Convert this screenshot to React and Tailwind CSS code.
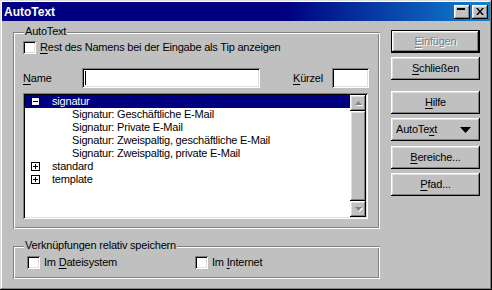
import React from 'react';

const raised = "shadow-[inset_-1px_-1px_0_#000,inset_1px_1px_0_#fff,inset_-2px_-2px_0_#808080,inset_2px_2px_0_#dfdfdf]";
const sunken = "shadow-[inset_1px_1px_0_#808080,inset_-1px_-1px_0_#fff,inset_2px_2px_0_#000,inset_-2px_-2px_0_#dfdfdf]";
const etched = "shadow-[inset_1px_1px_0_#808080,inset_-1px_-1px_0_#fff,inset_2px_2px_0_#fff,inset_-2px_-2px_0_#808080]";

const U = ({ children }) => <span className="underline underline-offset-[2px]">{children}</span>;

const Checkbox = () => (
  <div className={`w-[13px] h-[13px] bg-white shrink-0 ${sunken}`} />
);

const Legend = ({ children }) => (
  <div className="absolute left-[11px] top-[-7px] px-[1px] bg-[#c0c0c0] leading-[13px]">{children}</div>
);

const Button = ({ children, className = "" }) => (
  <div className={`h-[23px] w-[89px] flex items-center justify-center ${raised} ${className}`}>
    {children}
  </div>
);

const ArrowUp = ({ down }) => (
  <svg width="9" height="6" viewBox="0 0 9 6" className={down ? "rotate-180" : ""}>
    <polygon points="4.5,1 8,5 1,5" fill="#fff" transform={down ? "translate(-1,-1)" : "translate(1,1)"} />
    <polygon points="4.5,1 8,5 1,5" fill="#808080" />
  </svg>
);

const TreeBox = ({ open }) => (
  <div className="w-[9px] h-[9px] border border-black bg-white relative shrink-0">
    <div className="absolute left-[1px] top-[3px] w-[5px] h-[1px] bg-black" />
    {!open && <div className="absolute left-[3px] top-[1px] w-[1px] h-[5px] bg-black" />}
  </div>
);

export default function App() {
  const children = [
    "Signatur: Geschäftliche E-Mail",
    "Signatur: Private E-Mail",
    "Signatur: Zweispaltig, geschäftliche E-Mail",
    "Signatur: Zweispaltig, private E-Mail",
  ];

  return (
    <div className="w-[492px] h-[290px] bg-[#c0c0c0] p-[2px] flex flex-col text-[11px] tracking-[-0.2px] text-black font-['Liberation_Sans',Arial,sans-serif] shadow-[inset_-1px_-1px_0_#000,inset_1px_1px_0_#dfdfdf,inset_-2px_-2px_0_#808080,inset_2px_2px_0_#fff] overflow-hidden">
      {/* Title bar */}
      <div className="h-[19px] flex items-center justify-between pl-[2px] pr-[2px] bg-[linear-gradient(90deg,#000080_58%,#1084d0)]">
        <span className="text-white font-bold text-[12px] tracking-normal">AutoText</span>
        <div className="flex gap-[2px]">
          <div className={`w-[16px] h-[14px] bg-[#c0c0c0] relative ${raised}`}>
            <div className="absolute left-[3px] top-[3px] w-[8px] h-[2px] bg-black" />
          </div>
          <div className={`w-[16px] h-[14px] bg-[#c0c0c0] flex items-center justify-center ${raised}`}>
            <svg width="8" height="7" viewBox="0 0 8 7">
              <path d="M0 0h2l2 2.5L6 0h2L5 3.5 8 7H6L4 4.5 2 7H0l3-3.5z" fill="#000" />
            </svg>
          </div>
        </div>
      </div>

      {/* Body */}
      <div className="flex pl-[11px]">
        <div className="flex flex-col">
          {/* AutoText group */}
          <div className={`relative mt-[11px] w-[367px] h-[197px] pl-[10px] pt-[9px] flex flex-col ${etched}`}>
            <Legend>AutoText</Legend>
            <div className="flex items-center gap-[4px] h-[13px]">
              <Checkbox />
              <span><U>R</U>est des Namens bei der Eingabe als Tip anzeigen</span>
            </div>
            <div className="flex items-center mt-[14px] h-[20px]">
              <span className="w-[59px]"><U>N</U>ame</span>
              <div className={`w-[178px] h-[20px] bg-white relative ${sunken}`}>
                <div className="absolute left-[3px] top-[3px] w-[1px] h-[14px] bg-black" />
              </div>
              <span className="ml-[33px] w-[39px]"><U>K</U>ürzel</span>
              <div className={`w-[37px] h-[20px] bg-white ${sunken}`} />
            </div>
            <div className={`mt-[5px] w-[345px] h-[126px] bg-white p-[2px] flex ${sunken}`}>
              <div className="flex-1 flex flex-col leading-[13px]">
                <div className="h-[13px] flex items-center bg-[#000080] text-white pl-[6px]">
                  <TreeBox open />
                  <span className="ml-[12px]">signatur</span>
                </div>
                {children.map((c) => (
                  <div key={c} className="h-[13px] pl-[47px]">{c}</div>
                ))}
                <div className="h-[13px] flex items-center pl-[6px]">
                  <TreeBox />
                  <span className="ml-[12px]">standard</span>
                </div>
                <div className="h-[13px] flex items-center pl-[6px]">
                  <TreeBox />
                  <span className="ml-[12px]">template</span>
                </div>
              </div>
              <div className="w-[16px] flex flex-col bg-[#c0c0c0]">
                <div className={`h-[16px] flex items-center justify-center ${raised}`}>
                  <ArrowUp />
                </div>
                <div className={`flex-1 ${raised}`} />
                <div className={`h-[16px] flex items-center justify-center ${raised}`}>
                  <ArrowUp down />
                </div>
              </div>
            </div>
          </div>

          {/* Verknüpfungen group */}
          <div className={`relative mt-[17px] w-[367px] h-[33px] pl-[14px] pt-[10px] flex items-start ${etched}`}>
            <Legend>Verknüpfungen relativ speichern</Legend>
            <div className="w-[168px] flex items-center gap-[4px] h-[13px]">
              <Checkbox />
              <span>Im <U>D</U>ateisystem</span>
            </div>
            <div className="flex items-center gap-[4px] h-[13px]">
              <Checkbox />
              <span>Im <U>I</U>nternet</span>
            </div>
          </div>
        </div>

        {/* Buttons */}
        <div className="ml-[11px] mt-[9px] flex flex-col">
          <div className="w-[89px] h-[23px] border border-black">
            <div className={`h-[21px] flex items-center justify-center text-[#808080] [text-shadow:1px_1px_0_#fff] ${raised}`}>
              <span><U>E</U>infügen</span>
            </div>
          </div>
          <Button className="mt-[4px]"><span><U>S</U>chließen</span></Button>
          <Button className="mt-[11px]"><span><U>H</U>ilfe</span></Button>
          <div className={`mt-[4px] h-[23px] w-[89px] flex items-center justify-between pl-[5px] pr-[9px] ${raised}`}>
            <span>AutoTe<U>x</U>t</span>
            <svg width="11" height="6" viewBox="0 0 11 6"><polygon points="0,0 11,0 5.5,6" fill="#000" /></svg>
          </div>
          <Button className="mt-[5px]"><span><U>B</U>ereiche...</span></Button>
          <Button className="mt-[4px]"><span><U>P</U>fad...</span></Button>
        </div>
      </div>
    </div>
  );
}
